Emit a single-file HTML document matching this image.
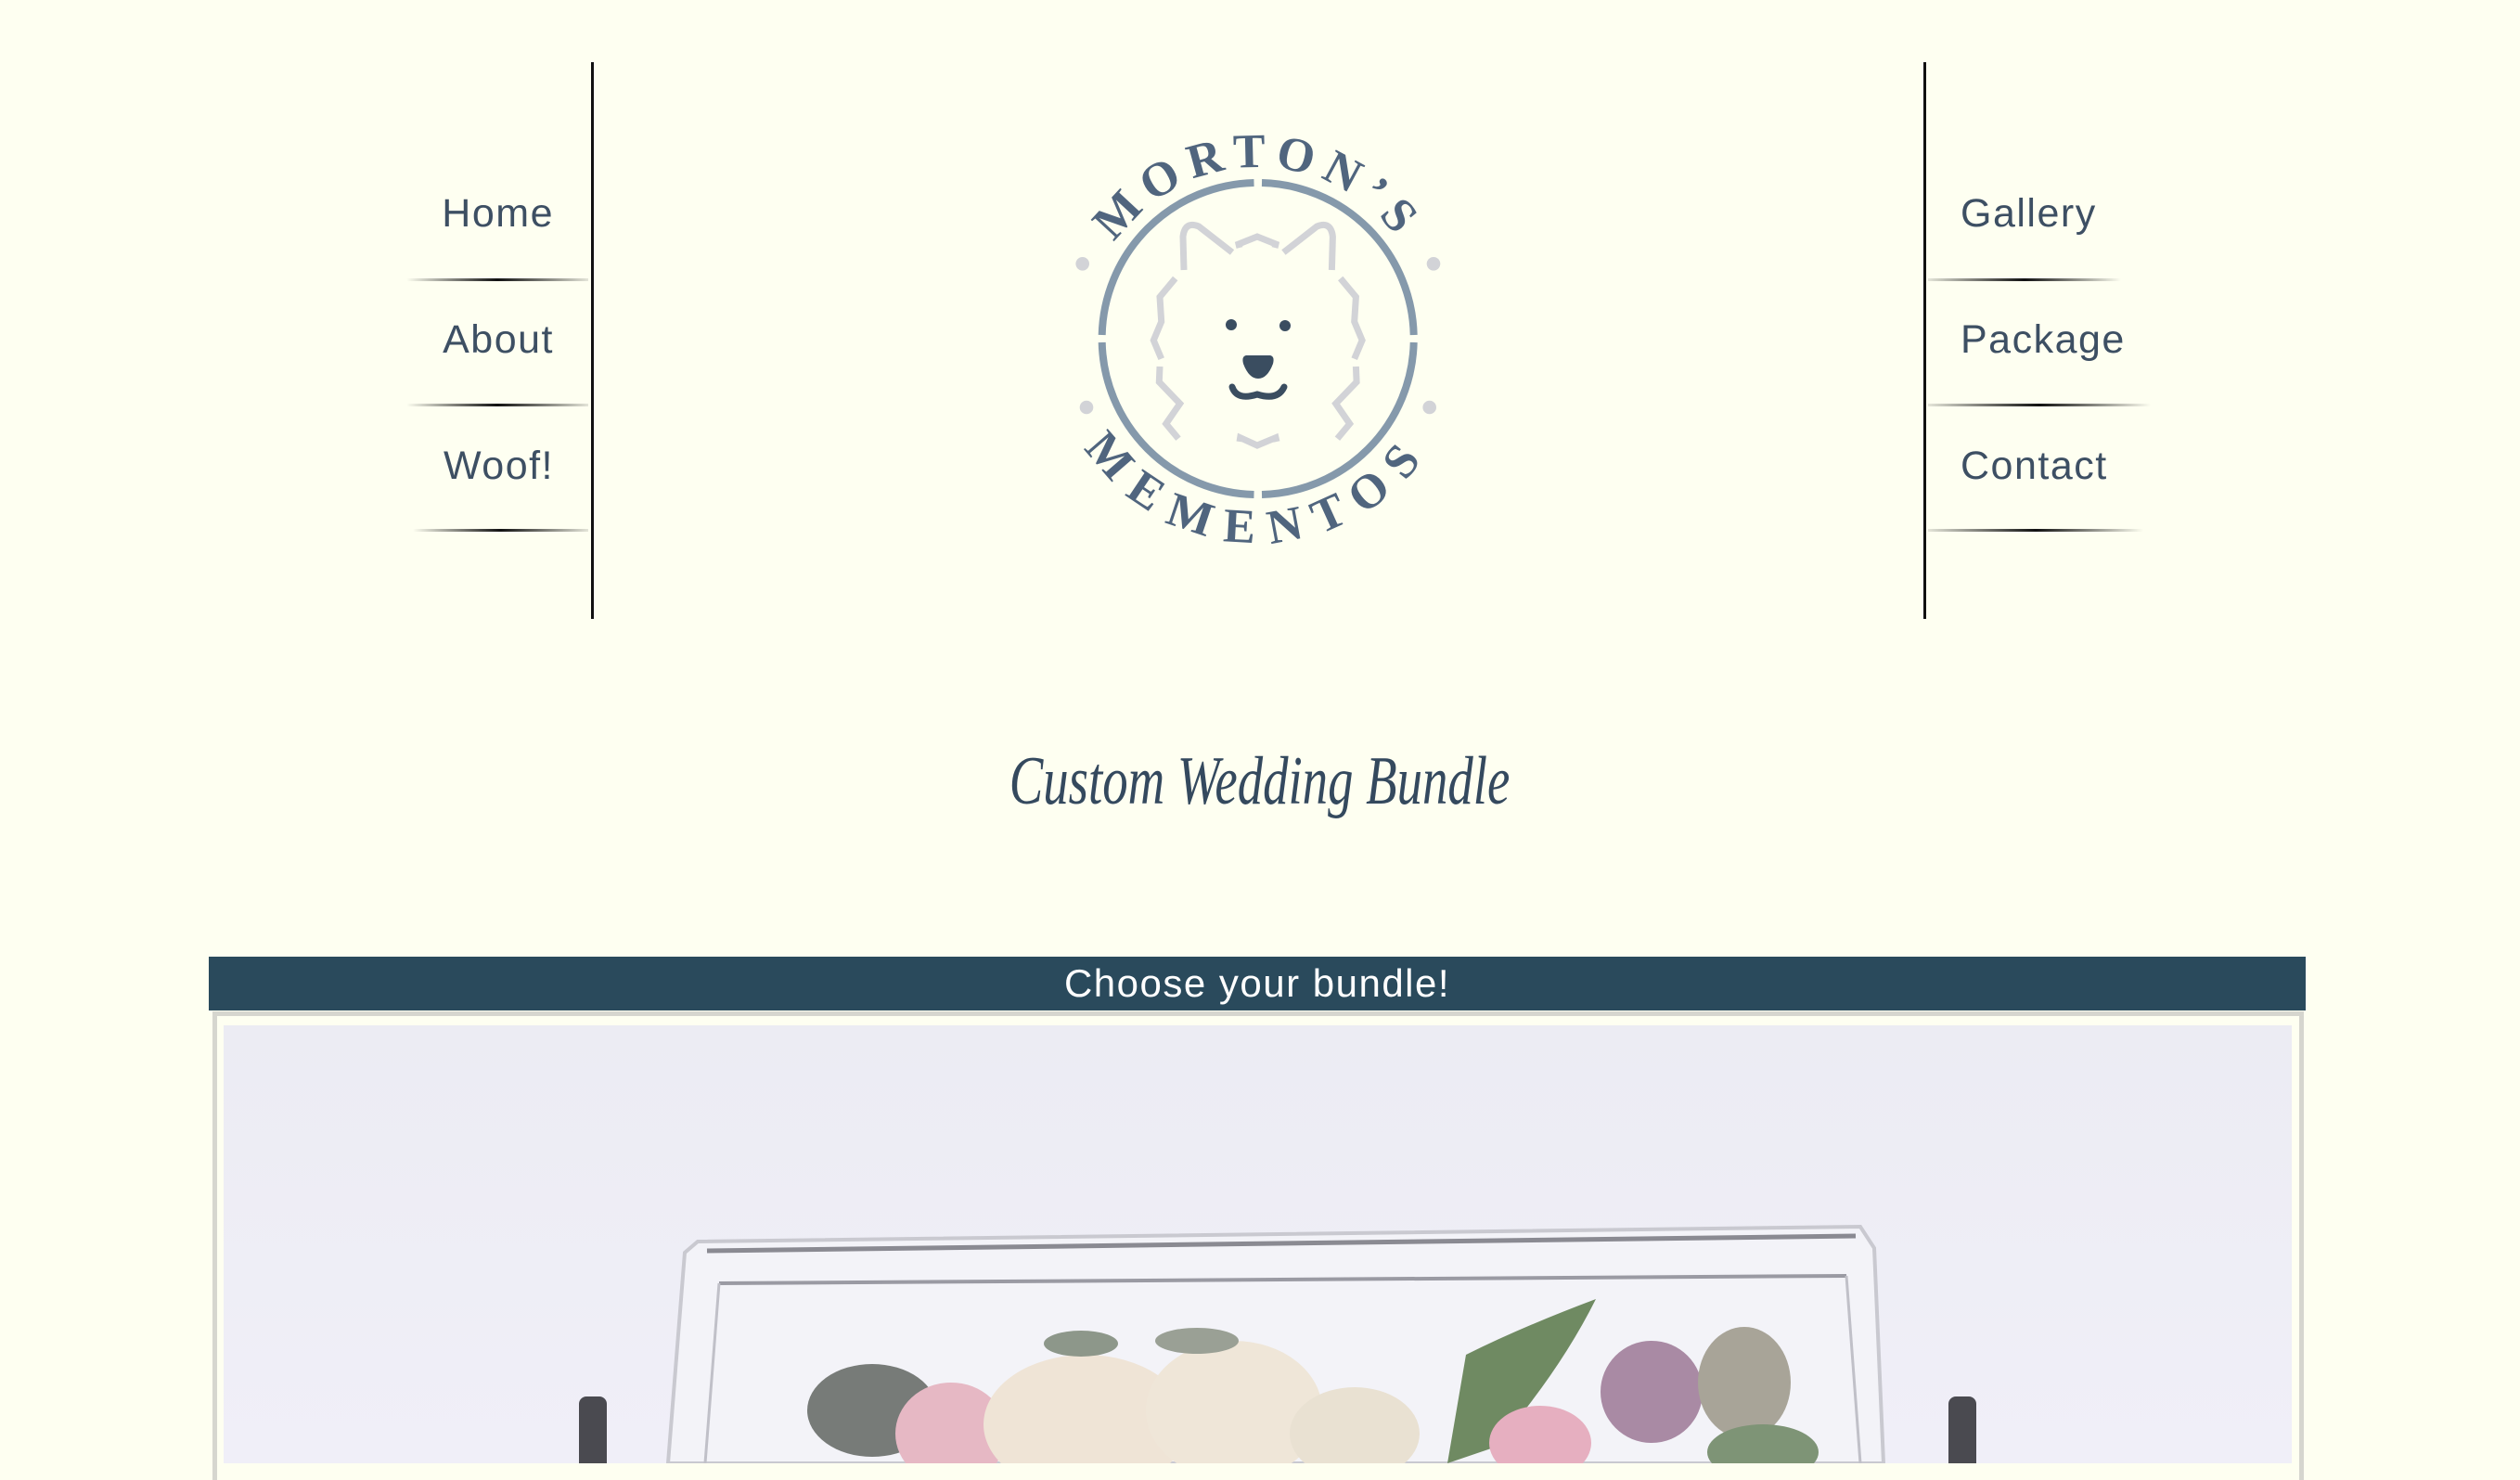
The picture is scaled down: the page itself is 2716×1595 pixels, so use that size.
<!DOCTYPE html>
<html><head><meta charset="utf-8"><style>
html,body{margin:0;padding:0;}
body{width:2716px;height:1577px;background:#fefff1;position:relative;overflow:hidden;font-family:"Liberation Sans",sans-serif;}
.vl{position:absolute;top:67px;width:3px;height:600px;background:#111;}
.nav{position:absolute;font-size:43px;color:#3d4f63;letter-spacing:1.5px;line-height:48px;}
.l{text-align:right;width:400px;}
.sep{position:absolute;height:3px;}
.sl{background:linear-gradient(to right,rgba(0,0,0,0),#111 50%,rgba(0,0,0,0.1));}
.sr{background:linear-gradient(to right,rgba(0,0,0,0.1),#111 50%,rgba(0,0,0,0));}
.title{position:absolute;left:0;width:2716px;top:800px;text-align:center;font-family:"Liberation Serif",serif;font-style:italic;font-size:74px;color:#34495e;}
.title span{display:inline-block;transform:scaleX(0.74);}
.bar{position:absolute;left:225px;top:1031px;width:2260px;height:58px;background:#2a4a5c;color:#fff;font-size:42px;text-align:center;line-height:58px;letter-spacing:1.5px;}
.frame{position:absolute;left:229px;top:1090px;width:2244px;height:500px;border:5px solid #d6d6cf;border-bottom:none;}
</style></head><body>
<div class="vl" style="left:637px"></div>
<div class="vl" style="left:2073px"></div>

<div class="nav l" style="left:197px;top:206px">Home</div>
<div class="nav l" style="left:197px;top:342px">About</div>
<div class="nav l" style="left:197px;top:478px">Woof!</div>
<div class="sep sl" style="left:438px;top:300px;width:196px"></div>
<div class="sep sl" style="left:438px;top:435px;width:196px"></div>
<div class="sep sl" style="left:445px;top:570px;width:189px"></div>

<div class="nav" style="left:2113px;top:206px">Gallery</div>
<div class="nav" style="left:2113px;top:342px">Package</div>
<div class="nav" style="left:2113px;top:478px">Contact</div>
<div class="sep sr" style="left:2078px;top:300px;width:208px"></div>
<div class="sep sr" style="left:2078px;top:435px;width:240px"></div>
<div class="sep sr" style="left:2078px;top:570px;width:232px"></div>

<svg style="position:absolute;left:1100px;top:100px" width="500" height="520" viewBox="1100 100 500 520">
 <g fill="none" stroke="#8599ab" stroke-width="8">
  <path d="M1351.5,197 A168,168 0 0 0 1187.7,361"/>
  <path d="M1360,197 A168,168 0 0 1 1523.7,361"/>
  <path d="M1187.7,369 A168,168 0 0 0 1351.5,533"/>
  <path d="M1523.7,369 A168,168 0 0 1 1360,533"/>
 </g>
 <g fill="#d2d3d7">
  <circle cx="1166.7" cy="284.3" r="7.3"/><circle cx="1545" cy="284.3" r="7.3"/>
  <circle cx="1171" cy="439" r="7.3"/><circle cx="1540.7" cy="439" r="7.3"/>
 </g>
 <g fill="none" stroke="#d2d3d7" stroke-width="7">
  <path d="M1276,291 L1275,255 Q1277,238 1292,244 L1328,272"/>
  <path d="M1435.4,291 L1436.4,255 Q1434.4,238 1419.4,244 L1383.4,272"/>
  <path d="M1336,267 L1335,263 L1355,255 L1375,263 L1374,267"/>
  <path d="M1266.7,300 L1250,320 L1251.7,346.7 L1243.3,366.7 L1251.7,386.7"/>
  <path d="M1250,395 L1249.3,411.7 L1271.7,435 L1256.7,456.7 L1270,472.7"/>
  <path d="M1444.7,300 L1461.4,320 L1459.7,346.7 L1468.1,366.7 L1459.7,386.7"/>
  <path d="M1461.4,395 L1462.1,411.7 L1439.7,435 L1454.7,456.7 L1441.4,472.7"/>
  <path d="M1336,476 L1336.7,471.7 L1355,480 L1375,471.7 L1376,476"/>
 </g>
 <g fill="#3a4d60">
  <circle cx="1327" cy="350" r="6"/><circle cx="1385" cy="351" r="6"/>
  <path d="M1343,383 L1369,383 Q1374,384 1372,392 Q1366,408 1356,408 Q1346,408 1340,392 Q1338,384 1343,383Z"/>
 </g>
 <path d="M1328,417 Q1333,432 1355,425 Q1377,432 1384,417" fill="none" stroke="#3a4d60" stroke-width="7" stroke-linecap="round"/>
 <defs>
  <path id="tp" d="M1170.7,365 A185,185 0 0 1 1540.7,365"/>
  <path id="bp" d="M1135.7,365 A220,220 0 0 0 1575.7,365"/>
 </defs>
 <g font-family="Liberation Serif,serif" font-weight="bold" font-size="52" fill="#50657e">
  <text letter-spacing="10"><textPath href="#tp" startOffset="50%" text-anchor="middle">MORTON’S</textPath></text>
  <text letter-spacing="17"><textPath href="#bp" startOffset="50%" text-anchor="middle">MEMENTOS</textPath></text>
 </g>
</svg>

<div class="title"><span>Custom Wedding Bundle</span></div>

<div class="bar">Choose your bundle!</div>
<div class="frame"></div>
<svg style="position:absolute;left:241px;top:1105px" width="2229" height="472" viewBox="241 1105 2229 472">
 <defs><linearGradient id="bg" x1="0" y1="0" x2="0" y2="1"><stop offset="0" stop-color="#ececf3"/><stop offset="1" stop-color="#f0eff8"/></linearGradient></defs>
 <rect x="241" y="1105" width="2229" height="472" fill="url(#bg)"/>
 <path d="M752,1338 L2005,1322 L2020,1345 L2030,1577 L720,1577 L738,1350Z" fill="#f3f3f8" stroke="#c9c9d0" stroke-width="4"/>
 <path d="M762,1348 L2000,1332" stroke="#8a8a92" stroke-width="5"/>
 <path d="M775,1383 L1990,1375" stroke="#9a9aa3" stroke-width="4"/>
 <path d="M775,1383 L760,1577 M1990,1375 L2005,1577" stroke="#c0c0c8" stroke-width="3"/>
 <rect x="624" y="1505" width="30" height="80" rx="8" fill="#4a4a50"/>
 <rect x="2100" y="1505" width="30" height="80" rx="8" fill="#4a4a50"/>
 <g>
  <ellipse cx="940" cy="1520" rx="70" ry="50" fill="#777b78"/>
  <ellipse cx="1025" cy="1545" rx="60" ry="55" fill="#e6b8c4"/>
  <ellipse cx="1170" cy="1535" rx="110" ry="75" fill="#efe4d6"/>
  <ellipse cx="1330" cy="1520" rx="95" ry="75" fill="#efe6d8"/>
  <ellipse cx="1460" cy="1545" rx="70" ry="50" fill="#e9e1d2"/>
  <path d="M1580,1460 Q1640,1430 1720,1400 Q1680,1480 1610,1560 L1560,1577Z" fill="#6f8a62"/>
  <ellipse cx="1660" cy="1555" rx="55" ry="40" fill="#e6afc0"/>
  <ellipse cx="1780" cy="1500" rx="55" ry="55" fill="#a98aa4"/>
  <ellipse cx="1880" cy="1490" rx="50" ry="60" fill="#a8a498"/>
  <ellipse cx="1900" cy="1565" rx="60" ry="30" fill="#7e9476"/>
  <ellipse cx="1165" cy="1448" rx="40" ry="14" fill="#8d978a"/>
  <ellipse cx="1290" cy="1445" rx="45" ry="14" fill="#9aa095"/>
 </g>
</svg>
</body></html>
